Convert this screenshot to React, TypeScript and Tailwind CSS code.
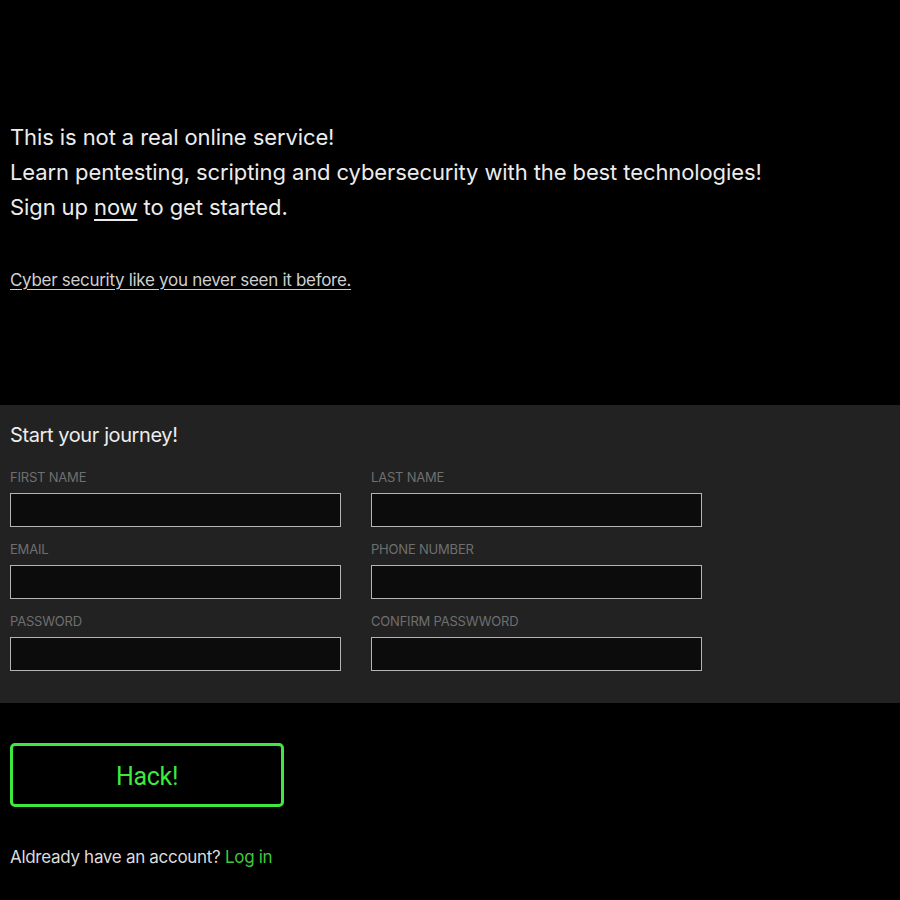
import React from 'react'

const font = "font-['Inter','Roboto','Liberation_Sans',sans-serif]"

function Field({ label }: { label: string }) {
  return (
    <div className="flex flex-col">
      <label className="text-[13px] leading-[16px] text-[#6f6f6f] tracking-[-0.2px] uppercase mb-[8px]">
        {label}
      </label>
      <input
        className="w-[331px] h-[34px] bg-[#0c0c0c] border border-[#b4b4b4] outline-none text-white px-2"
        type="text"
      />
    </div>
  )
}

export default function App() {
  return (
    <div className={`min-h-[900px] bg-black text-[#ececec] ${font}`}>
      {/* Intro */}
      <section className="px-[10px] pt-[120px]">
        <p className="text-[22px] leading-[35px] tracking-[-0.1px]">
          This is not a real online service!
          <br />
          Learn pentesting, scripting and cybersecurity with the best technologies!
          <br />
          Sign up <a className="underline underline-offset-[4px]" href="#">now</a> to get started.
        </p>
        <a
          href="#"
          className="inline-block mt-[44px] text-[17px] leading-[22px] text-[#cfcfcf] underline underline-offset-[3px] tracking-[-0.3px]"
        >
          Cyber security like you never seen it before.
        </a>
      </section>

      {/* Form panel */}
      <section className="mt-[113px] bg-[#222222] px-[10px] pt-[17px] pb-[32px]">
        <h2 className="text-[20px] leading-[26px] text-[#ededed] tracking-[-0.4px] mb-[21px]">Start your journey!</h2>
        <div className="grid grid-cols-[331px_331px] gap-x-[30px] gap-y-[14px]">
          <Field label="First name" />
          <Field label="Last name" />
          <Field label="Email" />
          <Field label="Phone number" />
          <Field label="Password" />
          <Field label="Confirm passwword" />
        </div>
      </section>

      {/* Submit */}
      <section className="px-[10px] pt-[40px]">
        <button className="w-[274px] h-[64px] border-[3px] border-[#3ee83e] rounded-[5px] text-[#3ee83e] text-[25px] tracking-[-0.3px] font-['Roboto',sans-serif] pt-[3px]">
          Hack!
        </button>
        <p className="mt-[38px] text-[17px] text-[#dcdcdc] tracking-[-0.3px]">
          Aldready have an account? <a href="#" className="text-[#3ec93e]">Log in</a>
        </p>
      </section>
    </div>
  )
}
